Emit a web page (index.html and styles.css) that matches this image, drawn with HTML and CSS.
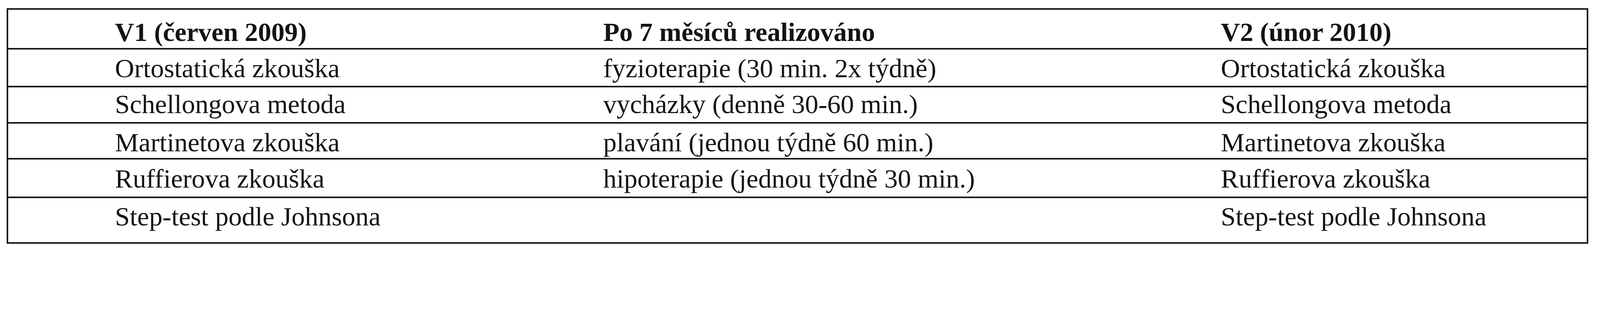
FILE: index.html
```html
<!DOCTYPE html>
<html lang="cs">
<head>
<meta charset="utf-8">
<title>Tabulka</title>
<link rel="stylesheet" href="styles.css">
</head>
<body>
<div class="table">
  <div class="cell head">V1 (červen 2009)</div>
  <div class="cell head">Po 7 měsíců realizováno</div>
  <div class="cell head">V2 (únor 2010)</div>

  <div class="cell r1">Ortostatická zkouška</div>
  <div class="cell r1">fyzioterapie (30 min. 2x týdně)</div>
  <div class="cell r1">Ortostatická zkouška</div>

  <div class="cell r2">Schellongova metoda</div>
  <div class="cell r2">vycházky (denně 30-60 min.)</div>
  <div class="cell r2">Schellongova metoda</div>

  <div class="cell r3">Martinetova zkouška</div>
  <div class="cell r3">plavání (jednou týdně 60 min.)</div>
  <div class="cell r3">Martinetova zkouška</div>

  <div class="cell r4">Ruffierova zkouška</div>
  <div class="cell r4">hipoterapie (jednou týdně 30 min.)</div>
  <div class="cell r4">Ruffierova zkouška</div>

  <div class="cell r5">Step-test podle Johnsona</div>
  <div class="cell r5"></div>
  <div class="cell r5">Step-test podle Johnsona</div>
</div>
</body>
</html>
```
FILE: styles.css
```css
* { box-sizing: border-box; }

html, body {
  background: #ffffff;
}

body {
  margin: 0;
  padding: 21.4px 0 0 17.1px;
  font-family: "Liberation Serif", "Times New Roman", serif;
  color: #141414;
}

.table {
  width: 4049px;
  display: grid;
  grid-template-columns: 1250px 1581px 1210px;
  grid-template-rows: 97.6px 97px 92.6px 92.6px 98.7px 116.8px;
  border: 4px solid #161616;
}

.cell {
  font-size: 68.4px;
  line-height: 1;
  padding-left: 273.2px;
  white-space: nowrap;
  border-top: 4px solid #161616;
}

.head {
  font-weight: bold;
  font-size: 68px;
  border-top: none;
  padding-top: 22.8px;
}

.r1 { padding-top: 14.2px; }
.r2 { padding-top: 9px; }
.r3 { padding-top: 14.2px; }
.r4 { padding-top: 15.1px; }
.r5 { padding-top: 13.3px; }
```
